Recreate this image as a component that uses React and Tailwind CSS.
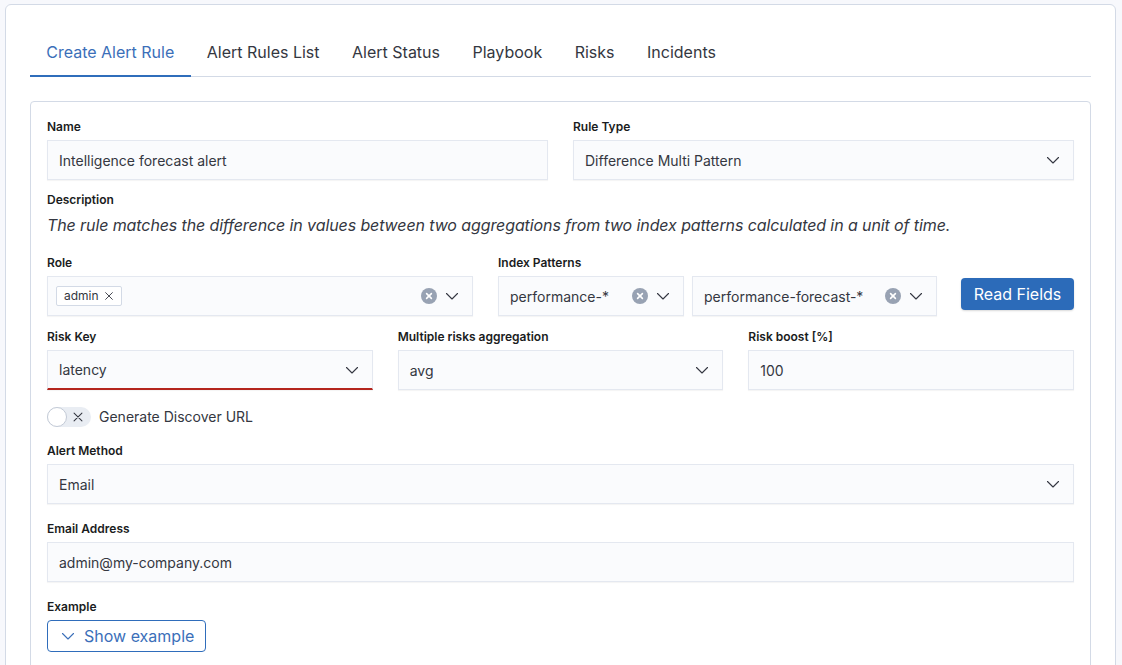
import React from "react";

const Chevron = ({ className = "" }) => (
  <svg viewBox="0 0 16 16" className={`w-4 h-4 ${className}`} fill="none">
    <path d="M2.5 5.5L8 11l5.5-5.5" stroke="currentColor" strokeWidth="1.1" strokeLinecap="round" strokeLinejoin="round" />
  </svg>
);

const ClearIcon = () => (
  <svg viewBox="0 0 16 16" className="w-4 h-4">
    <circle cx="8" cy="8" r="8" fill="#98a2b3" />
    <path d="M5.6 5.6l4.8 4.8M10.4 5.6l-4.8 4.8" stroke="white" strokeWidth="1.6" strokeLinecap="round" />
  </svg>
);

const Cross = ({ className = "" }) => (
  <svg viewBox="0 0 16 16" className={className} fill="none">
    <path d="M3.5 3.5l9 9M12.5 3.5l-9 9" stroke="currentColor" strokeWidth="1.2" strokeLinecap="round" />
  </svg>
);

const Label = ({ children, className = "" }) => (
  <div className={`text-[12px] leading-4 font-semibold text-[#1a1c21] ${className}`}>{children}</div>
);

const Field = ({ children, className = "" }) => (
  <div
    className={`h-10 flex items-center bg-[#fafbfd] border border-[#e4e8f0] shadow-[0_1px_1px_rgba(0,0,0,0.04)] text-[14px] text-[#343741] ${className}`}
  >
    {children}
  </div>
);

const SelectField = ({ value, className = "" }) => (
  <Field className={`pl-[11px] pr-3 justify-between ${className}`}>
    <span>{value}</span>
    <Chevron className="text-[#343741]" />
  </Field>
);

const tabs = ["Create Alert Rule", "Alert Rules List", "Alert Status", "Playbook", "Risks", "Incidents"];

export default function App() {
  return (
    <div
      className="h-[665px] overflow-hidden bg-[#f7f8fc] pt-[4px] pl-[5px]"
      style={{ fontFamily: "Inter, 'Noto Sans', sans-serif" }}
    >
      <div className="w-[1111px] bg-white border border-[#d3dae6] rounded-[6px] px-[24px] pt-[24px] pb-10">
        {/* tabs */}
        <div className="flex border-b border-[#d3dae6]">
          {tabs.map((t, i) => (
            <div
              key={t}
              className={`px-[16.25px] h-[48px] flex items-center text-[16px] -mb-px ${
                i === 0
                  ? "text-[#3b6fb9] border-b-2 border-[#2f6dbb]"
                  : "text-[#343741] border-b-2 border-transparent"
              }`}
            >
              {t}
            </div>
          ))}
        </div>

        {/* form panel */}
        <div className="mt-[24px] border border-[#d3dae6] rounded-[4px] px-4 pt-[17px] pb-16">
          <div className="grid grid-cols-2 gap-x-[25px]">
            <div>
              <Label>Name</Label>
              <Field className="mt-[5px] px-[11px]">Intelligence forecast alert</Field>
            </div>
            <div>
              <Label>Rule Type</Label>
              <SelectField className="mt-[5px]" value="Difference Multi Pattern" />
            </div>
          </div>

          <Label className="mt-3">Description</Label>
          <div className="mt-[5px] text-[16px] leading-6 italic tracking-[-0.1px] text-[#343741]">
            The rule matches the difference in values between two aggregations from two index patterns calculated in a unit of time.
          </div>

          <div className="flex gap-[25px] mt-[18px]">
            <div className="w-[426px]">
              <Label>Role</Label>
              <Field className="mt-[5px] pl-2 pr-3 justify-between">
                <span className="flex items-center gap-1 h-[20px] pl-[7px] pr-[6px] border border-[#d3dae6] bg-white rounded-[2px] text-[12px] text-[#343741]">
                  admin
                  <Cross className="w-3 h-3 text-[#343741]" />
                </span>
                <span className="flex items-center gap-[7px]">
                  <ClearIcon />
                  <Chevron className="text-[#343741]" />
                </span>
              </Field>
            </div>
            <div className="flex-1">
              <Label>Index Patterns</Label>
              <div className="mt-[5px] flex items-start">
                <Field className="w-[186px] pl-[11px] pr-3 justify-between">
                  <span>performance-*</span>
                  <span className="flex items-center gap-[7px]">
                    <ClearIcon />
                    <Chevron className="text-[#343741]" />
                  </span>
                </Field>
                <Field className="ml-[8px] w-[245px] pl-[11px] pr-3 justify-between">
                  <span>performance-forecast-*</span>
                  <span className="flex items-center gap-[7px]">
                    <ClearIcon />
                    <Chevron className="text-[#343741]" />
                  </span>
                </Field>
                <button className="ml-[24px] mt-[2px] w-[113px] h-8 rounded-[4px] bg-[#2c6bb9] text-white text-[16px] shadow-[0_1px_2px_rgba(0,0,0,0.15)]">
                  Read Fields
                </button>
              </div>
            </div>
          </div>

          <div className="grid grid-cols-3 gap-x-[25px] mt-[13px]">
            <div>
              <Label>Risk Key</Label>
              <SelectField className="mt-[5px] border-b-2 border-b-[#b4251d]" value="latency" />
            </div>
            <div>
              <Label>Multiple risks aggregation</Label>
              <SelectField className="mt-[5px]" value="avg" />
            </div>
            <div>
              <Label>Risk boost [%]</Label>
              <Field className="mt-[5px] px-[11px]">100</Field>
            </div>
          </div>

          <div className="mt-4 flex items-center gap-2">
            <div className="relative w-[44px] h-[20px] rounded-full bg-[#e9edf3] flex items-center">
              <div className="w-[20px] h-[20px] rounded-full bg-white border border-[#c3cad6]" />
              <Cross className="w-[14px] h-[14px] text-[#343741] ml-[4px]" />
            </div>
            <span className="text-[14px] text-[#343741]">Generate Discover URL</span>
          </div>

          <Label className="mt-4">Alert Method</Label>
          <SelectField className="mt-[5px]" value="Email" />

          <Label className="mt-[17px]">Email Address</Label>
          <Field className="mt-[5px] px-[11px]">admin@my-company.com</Field>

          <Label className="mt-[17px]">Example</Label>
          <button className="mt-[5px] h-8 w-[159px] flex items-center gap-2 pl-3 border border-[#2f6dbb] rounded-[4px] text-[16px] text-[#3b6fb9]">
            <Chevron className="w-4 h-4" />
            Show example
          </button>
        </div>
      </div>
    </div>
  );
}
